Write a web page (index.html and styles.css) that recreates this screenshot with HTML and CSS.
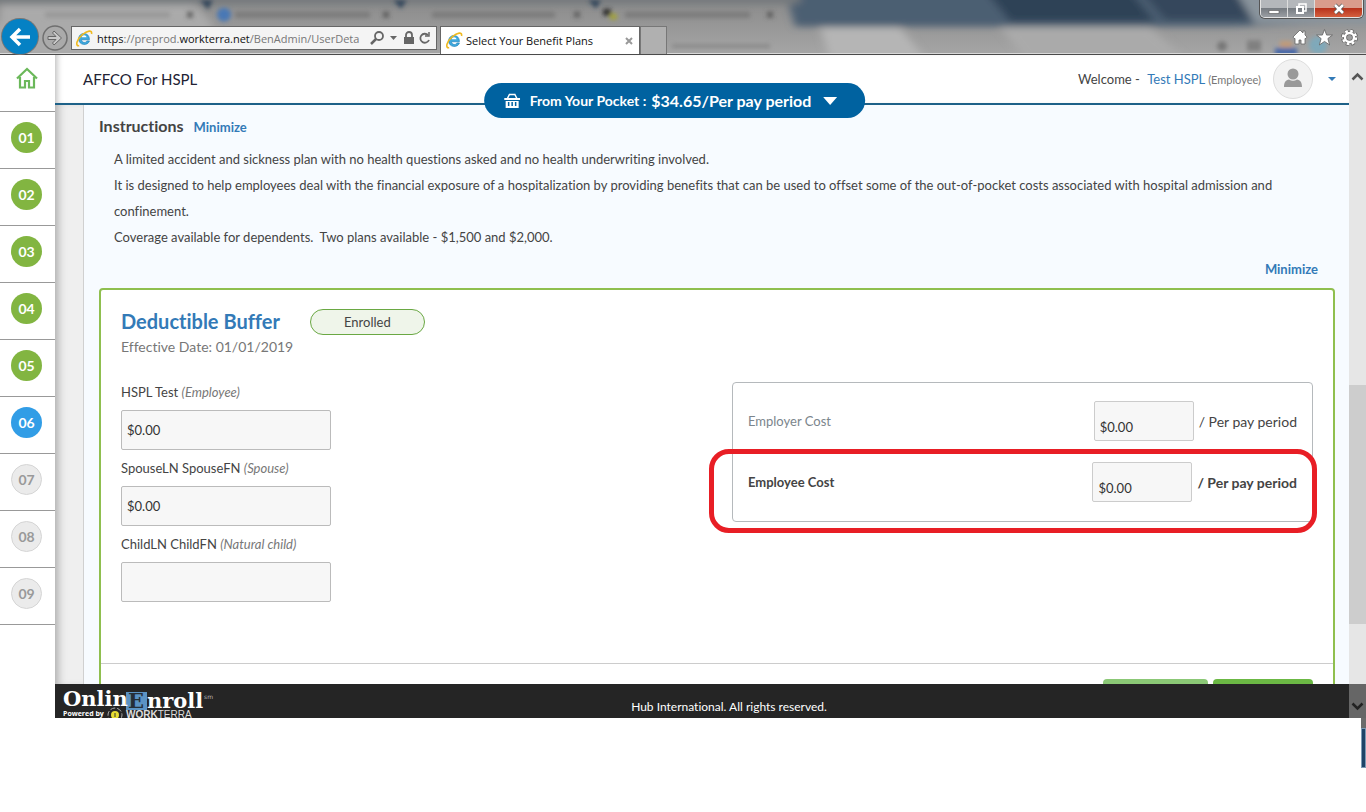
FILE: index.html
```html
<!DOCTYPE html>
<html lang="en">
<head>
    <meta charset="UTF-8">
    <meta name="viewport" content="width=device-width, initial-scale=1.0">
    <title>Select Your Benefit Plans</title>
    <link rel="stylesheet" href="styles.css">
</head>
<body>
    <svg class="defs" width="0" height="0" aria-hidden="true">
        <symbol id="ie" viewBox="0 0 16 16">
            <path d="M12.6 9.2H5.2c.2 3 4.300 3.300 5 1.100h2.500c-1.600 5-10.200 4.400-10.200-2 0-6.600 10.400-7 10.100.900z" fill="#3fa9dd" stroke="#1b7fba" stroke-width=".6"/>
            <path d="M5.300 6.900h4.600c-.2-2.500-4.200-2.600-4.600 0z" fill="#fff"/>
            <path d="M3 14.800C-1 15.500.5 9 6 4.400 10.500.6 15.500-.5 14.600 3.800" fill="none" stroke="#efb920" stroke-width="1.500"/>
        </symbol>
    </svg>

    <div class="browser">
        <!-- window frame -->
        <div class="chrome">
            <svg class="glass" viewBox="0 0 1366 54" preserveAspectRatio="none" aria-hidden="true">
                <defs>
                    <linearGradient id="toolbar" x1="0" y1="0" x2="0" y2="1">
                        <stop offset="0" stop-color="#8a8a8a"/>
                        <stop offset="1" stop-color="#a5a5a5"/>
                    </linearGradient>
                    <filter id="soft" x="-20%" y="-50%" width="140%" height="200%"><feGaussianBlur stdDeviation="4"/></filter>
                    <filter id="soft2" x="-20%" y="-80%" width="140%" height="260%"><feGaussianBlur stdDeviation="2"/></filter>
                </defs>
                <rect width="1366" height="54" fill="url(#toolbar)"/>
                <g filter="url(#soft)">
                    <path d="M785-10H1380V22L1230 27H795z" fill="#4b5f72"/>
                    <path d="M985-10H1130L1155 22H1010z" fill="#2f4257"/>
                    <path d="M1140-10H1240L1270 20H1165z" fill="#34475c"/>
                    <path d="M1235-10H1380V24H1255z" fill="#8a949d"/>
                    <path d="M-10-10H800V4H-10z" fill="#75797d"/>
                    <path d="M0 5H195L215 27H0z" fill="#aaa"/>
                    <path d="M-10 24H210V60H-10z" fill="#aaa"/>
                    <path d="M820 28H900L925 60H830z" fill="#b5b5b5"/>
                    <path d="M1000 28H1150L1185 60H1025z" fill="#aaa"/>
                </g>
                <g filter="url(#soft2)">
                    <path d="M45 12h125v6H45z" fill="#999"/>
                    <path d="M235 12h135v6H235zM432 12h123v6H432zM625 12h125v6H625z" fill="#7c7c7c"/>
                    <path d="M187 12l6 6m0-6l-6 6M383 12l6 6m0-6l-6 6M574 12l6 6m0-6l-6 6M767 12l6 6m0-6l-6 6" stroke="#555" stroke-width="2"/>
                    <path d="M200 0h13l-5 10zM393 0h14l-6 9zM588 0h13l-5 9z" fill="#34475c"/>
                    <circle cx="224" cy="15" r="7" fill="#4a78b5"/>
                    <path d="M603 9h8v7h-8z" fill="#333"/>
                    <path d="M610 14h7v6h-7z" fill="#a3a33a"/>
                    <path d="M672 45h98v4h-98z" fill="#888"/>
                    <circle cx="1222" cy="47" r="5" fill="#777"/>
                    <path d="M1247 41h14v11h-14z" fill="#808080"/>
                    <path d="M1275 49h22v8h-22z" fill="#4668a8"/>
                    <path d="M1280 42h12v6h-12z" fill="#c39a76"/>
                    <circle cx="1318" cy="46" r="9" fill="#7fa9ba"/>
                </g>
            </svg>
            <div class="window-buttons">
                <button type="button" aria-label="Minimize window"><svg width="12" height="12" viewBox="0 0 12 12"><path d="M1 7.500h10v3H1z" fill="#fff" stroke="#555" stroke-width=".6"/></svg></button>
                <button type="button" aria-label="Restore window"><svg width="12" height="12" viewBox="0 0 12 12"><path d="M4 3V1h7v7H9" fill="none" stroke="#fff" stroke-width="1.500"/><path d="M2 4h6v6H2z" fill="none" stroke="#fff" stroke-width="2"/></svg></button>
                <button type="button" class="close" aria-label="Close window"><svg width="12" height="12" viewBox="0 0 12 12"><path d="M2 2l8 8M10 2l-8 8" stroke="#555" stroke-width="4"/><path d="M2 2l8 8M10 2l-8 8" stroke="#fff" stroke-width="2.600"/></svg></button>
            </div>
            <div class="toolbar">
                <button type="button" class="back" aria-label="Back"><svg width="24" height="24" viewBox="0 0 24 24"><path d="M22 12H5M12 4l-8 8 8 8" fill="none" stroke="#fff" stroke-width="3.500"/></svg></button>
                <button type="button" class="forward" aria-label="Forward"><svg width="26" height="26" viewBox="0 0 26 26"><circle cx="13" cy="13" r="12" fill="#aaa" stroke="#6f6f6f" stroke-width="1.500"/><path d="M6 11.500h8L10.500 8l1.500-2 7.500 7-7.500 7-1.500-2 3.500-3.500H6z" fill="#c9c9c9" stroke="#666"/></svg></button>
                <div class="address">
                    <svg width="17" height="17"><use href="#ie"/></svg>
                    <div class="url"><b>https</b>://preprod.<b>workterra.net</b>/BenAdmin/UserDeta</div>
                    <svg width="62" height="16" viewBox="0 0 62 16" fill="none" stroke="#666">
                        <circle cx="9" cy="6" r="4" stroke-width="1.800"/><path d="M6 9l-5 5" stroke-width="2.500"/>
                        <path d="M20 6h7l-3.500 4z" fill="#666" stroke="none"/>
                        <path d="M34 7h10v7H34z" fill="#666" stroke="none"/><path d="M36 8V5a3 3 0 0 1 6 0v3" stroke-width="1.800"/>
                        <path d="M58 5a4.500 4.500 0 1 0 1 5" stroke-width="1.800"/><path d="M59 2v4h-4" stroke-width="1.500"/>
                    </svg>
                </div>
                <div class="tab">
                    <svg width="17" height="17"><use href="#ie"/></svg>
                    <span>Select Your Benefit Plans</span>
                    <button type="button" aria-label="Close tab"><svg width="8" height="8" viewBox="0 0 8 8"><path d="M1 1l6 6M7 1L1 7" stroke="#999" stroke-width="2"/></svg></button>
                </div>
                <button type="button" class="new-tab" aria-label="New tab"></button>
                <div class="tools">
                    <svg width="16" height="16" viewBox="0 0 16 16"><path d="M8 1L1 8l1 1.500h1V15h4v-4h2v4h4V9.500h1L15 8l-2-2V2h-2v2z" fill="#fff" stroke="#666" stroke-width=".8"/></svg>
                    <svg width="17" height="17" viewBox="0 0 16 16"><path d="M8 .5l2 5.200h5.500L11.200 9l1.600 6L8 11.700 3.200 15l1.600-6L.5 5.700H6z" fill="#fff" stroke="#666" stroke-width=".8"/></svg>
                    <svg width="17" height="17" viewBox="0 0 17 17"><circle cx="8.500" cy="8.500" r="6.500" fill="none" stroke="#666" stroke-width="4" stroke-dasharray="3.100 2"/><circle cx="8.500" cy="8.500" r="4.500" fill="none" stroke="#666" stroke-width="4"/><circle cx="8.500" cy="8.500" r="6.500" fill="none" stroke="#fff" stroke-width="2.400" stroke-dasharray="2.600 2.500"/><circle cx="8.500" cy="8.500" r="4.500" fill="none" stroke="#fff" stroke-width="2.400"/></svg>
                </div>
            </div>
        </div>

        <div class="viewport">
            <div class="page">
                <nav class="steps">
                    <a href="#" class="home" aria-label="Home"><svg width="22" height="22" viewBox="0 0 22 22" fill="none" stroke="#6bb85a" stroke-width="2.200"><path d="M1 11.500L11 2l10 9.500M4 10v10.500h5V14h4v6.500h5V10"/></svg></a>
                    <a href="#"><span class="step">01</span></a>
                    <a href="#"><span class="step">02</span></a>
                    <a href="#"><span class="step">03</span></a>
                    <a href="#"><span class="step">04</span></a>
                    <a href="#"><span class="step">05</span></a>
                    <a href="#"><span class="step current">06</span></a>
                    <a href="#"><span class="step pending">07</span></a>
                    <a href="#"><span class="step pending">08</span></a>
                    <a href="#"><span class="step pending">09</span></a>
                </nav>

                <div class="main">
                    <header class="header">
                        <div class="company">AFFCO For HSPL</div>
                        <div class="user">
                            <span>Welcome -</span>
                            <a href="#">Test HSPL</a>
                            <small>(Employee)</small>
                        </div>
                        <div class="avatar"><svg width="20" height="20" viewBox="0 0 20 20" fill="#999"><circle cx="10" cy="6" r="5.500"/><path d="M1 19c0-5 2-7 5-7.500 2.500 1.800 5.500 1.800 8 0 3 .5 5 2.500 5 7.500z"/></svg></div>
                        <button type="button" class="user-menu" aria-label="User menu"><svg width="8" height="4" viewBox="0 0 8 4"><path d="M0 0h8L4 4z" fill="#337ab7"/></svg></button>
                    </header>

                    <div class="content">
                        <div class="panel">
                            <div class="heading">
                                <h2>Instructions</h2>
                                <a href="#">Minimize</a>
                            </div>
                            <div class="instructions">
                                <p>A limited accident and sickness plan with no health questions asked and no health underwriting involved.</p>
                                <p>It is designed to help employees deal with the financial exposure of a hospitalization by providing benefits that can be used to offset some of the out-of-pocket costs associated with hospital admission and confinement.</p>
                                <p>Coverage available for dependents.&nbsp; Two plans available - $1,500 and $2,000.</p>
                            </div>
                            <a href="#" class="minimize">Minimize</a>

                            <section class="card">
                                <div class="card-body">
                                    <div class="plan">
                                        <h3>Deductible Buffer</h3>
                                        <span class="badge">Enrolled</span>
                                    </div>
                                    <div class="effective">Effective Date: 01/01/2019</div>
                                    <div class="columns">
                                        <form class="members">
                                            <label for="employee">HSPL Test <i>(Employee)</i></label>
                                            <input type="text" id="employee" value="$0.00">
                                            <label for="spouse">SpouseLN SpouseFN <i>(Spouse)</i></label>
                                            <input type="text" id="spouse" value="$0.00">
                                            <label for="child">ChildLN ChildFN <i>(Natural child)</i></label>
                                            <input type="text" id="child" value="">
                                        </form>
                                        <div class="costs">
                                            <div class="cost">
                                                <label for="employerCost">Employer Cost</label>
                                                <input type="text" id="employerCost" value="$0.00">
                                                <span>/ Per pay period</span>
                                            </div>
                                            <div class="cost employee">
                                                <label for="employeeCost">Employee Cost</label>
                                                <input type="text" id="employeeCost" value="$0.00">
                                                <span>/ Per pay period</span>
                                            </div>
                                            <div class="highlight"></div>
                                        </div>
                                    </div>
                                </div>
                                <div class="card-footer">
                                    <button type="button" class="light" aria-label="Previous"></button>
                                    <button type="button" aria-label="Next"></button>
                                </div>
                            </section>
                        </div>
                    </div>

                    <footer class="footer">
                        <svg class="logo" width="152" height="34" viewBox="0 0 152 34">
                            <path d="M63 8h21v18H63z" fill="#5b93c4"/>
                            <text x="0" y="22" class="logo-name">Onlin</text>
                            <text x="65" y="24" class="logo-e">E</text>
                            <text x="84" y="24" class="logo-name">nroll</text>
                            <text x="141" y="15" class="logo-mark">sm</text>
                            <text x="0" y="32" class="logo-powered">Powered by</text>
                            <circle cx="52" cy="31" r="7" fill="none" stroke="#aaa" stroke-width="1" stroke-dasharray="5 2"/>
                            <circle cx="52" cy="31" r="4" fill="#e6dc32"/>
                            <path d="M52 29v4" stroke="#333"/>
                            <text x="63" y="34" class="logo-work"><tspan class="strong">WORK</tspan>TERRA</text>
                        </svg>
                        <p>Hub International. All rights reserved.</p>
                    </footer>
                </div>

                <button type="button" class="pocket">
                    <svg width="16" height="16" viewBox="0 0 16 16"><path d="M3 6l2.500-5M13 6l-2.500-5M5 1.500h6" stroke="#fff" stroke-width="1.500" fill="none"/><path d="M0 5h16v2H0z" fill="#fff"/><path d="M1.500 8h13v7h-13z" fill="#fff"/><path d="M4.500 9v4M8 9v4M11.500 9v4" stroke="#0062a0" stroke-width="1.500"/></svg>
                    <span>From Your Pocket :</span>
                    <strong>$34.65/Per pay period</strong>
                    <svg width="14" height="8" viewBox="0 0 14 8"><path d="M0 0h14L7 8z" fill="#fff"/></svg>
                </button>
            </div>

            <div class="scrollbar">
                <svg width="13" height="9" viewBox="0 0 13 9"><path d="M1.500 7.500l5-5 5 5" fill="none" stroke="#555" stroke-width="2.500"/></svg>
                <div class="thumb"></div>
                <div class="scroll-end"><svg width="13" height="9" viewBox="0 0 13 9"><path d="M1.500 1.500l5 5 5-5" fill="none" stroke="#222" stroke-width="2.500"/></svg></div>
            </div>
        </div>
    </div>
    <div class="desktop-edge"></div>
</body>
</html>
```
FILE: styles.css
```css
* {
    box-sizing: border-box;
}
body {
    margin: 0;
    background-color: #ffffff;
    color: #444444;
    font-family: Lato, "Liberation Sans", sans-serif;
    font-size: 13px;
    font-variant-ligatures: none;
    overflow: hidden;
}
a {
    color: #337ab7;
    text-decoration: none;
}
button {
    border: none;
    padding: 0;
    background: none;
    font-family: inherit;
    cursor: pointer;
}
h2, h3, p {
    margin: 0;
}
svg {
    display: block;
    flex-shrink: 0;
}
.defs {
    position: absolute;
}
.browser {
    display: flex;
    flex-direction: column;
    height: calc(100vh - 94px);
}

/* window frame */
.chrome {
    position: relative;
    height: 55px;
    flex-shrink: 0;
    border-bottom: 1px solid #4a4a4a;
}
.glass {
    position: absolute;
    top: 0;
    left: 0;
    width: 100%;
    height: 100%;
    border-bottom: 1px solid #d8d8d8;
}
.window-buttons {
    position: absolute;
    top: 0;
    right: 3px;
    display: flex;
    height: 18px;
    border: 1px solid #e4e4e4;
    border-top: none;
    border-radius: 0 0 5px 5px;
    overflow: hidden;
    box-shadow: 0 0 0 1px #555555;
}
.window-buttons button {
    width: 27px;
    display: flex;
    align-items: center;
    justify-content: center;
    background: linear-gradient(#b4b7bb 50%, #777c82 50%, #9a9ea3);
    border-right: 1px solid #dddddd;
}
.window-buttons .close {
    width: 47px;
    background: linear-gradient(#d99c8c 45%, #b8331c 50%, #d4603f);
    border: none;
}
.toolbar {
    position: relative;
    display: flex;
    align-items: flex-end;
    height: 54px;
}
.back {
    display: flex;
    align-items: center;
    justify-content: center;
    width: 36px;
    height: 35px;
    margin-left: 2px;
    border-radius: 18px;
    background-color: #0581c4;
    box-shadow: 0 0 0 1px #777777;
}
.forward {
    margin: 0 3px 3px 4px;
}
.address {
    display: flex;
    align-items: center;
    gap: 4px;
    width: 366px;
    height: 24px;
    padding: 0 4px;
    margin-bottom: 4px;
    background-color: #f4f4f4;
    border: 1px solid #666666;
}
.url {
    flex: 1;
    white-space: nowrap;
    color: #777777;
    font: 11px "Open Sans", sans-serif;
}
.url b {
    color: #111111;
    font-weight: 400;
}
.tab {
    display: flex;
    align-items: center;
    gap: 3px;
    width: 200px;
    height: 28px;
    margin-left: 3px;
    padding: 0 6px 0 5px;
    background-color: #ffffff;
    border: 1px solid #666666;
    border-bottom: none;
    color: #111111;
    font: 11px "Open Sans", sans-serif;
}
.tab span {
    flex: 1;
    white-space: nowrap;
}
.new-tab {
    width: 27px;
    height: 28px;
    background-color: #b0b0b0;
    border: 1px solid #777777;
    border-bottom: none;
}
.tools {
    display: flex;
    gap: 8px;
    margin: 0 8px 8px auto;
}

/* page */
.viewport {
    display: flex;
    flex: 1;
    min-height: 0;
}
.page {
    position: relative;
    display: flex;
    flex: 1;
    min-width: 0;
}
.steps {
    width: 55px;
    flex-shrink: 0;
    background-color: #ffffff;
}
.steps a {
    display: flex;
    align-items: center;
    justify-content: center;
    height: 57px;
    padding: 0 2px 6px 0;
    border-bottom: 1px solid #999999;
}
.steps .home {
    padding-bottom: 10px;
}
.step {
    width: 31px;
    height: 31px;
    border-radius: 50%;
    background-color: #82b541;
    color: #ffffff;
    font-size: 14px;
    font-weight: 700;
    line-height: 32px;
    text-align: center;
}
.step.current {
    background-color: #319de6;
}
.step.pending {
    background-color: #ebebeb;
    border: 1px solid #d5d5d5;
    color: #999999;
    line-height: 30px;
}
.main {
    display: flex;
    flex-direction: column;
    flex: 1;
    min-width: 0;
}
.header {
    display: flex;
    align-items: center;
    height: 50px;
    flex-shrink: 0;
    padding: 0 13px 0 28px;
    border-bottom: 2px solid #1d6188;
    box-shadow: inset 6px 0 6px -4px #bbbbbb;
}
.company {
    flex: 1;
    color: #222233;
    font-size: 15px;
}
.user a {
    margin: 0 0 0 4px;
}
.user small {
    color: #777777;
    font-size: 11px;
}
.avatar {
    display: flex;
    justify-content: center;
    width: 40px;
    height: 40px;
    margin: 0 15px 0 12px;
    padding-top: 8px;
    border: 1px solid #dddddd;
    border-radius: 50%;
    background-color: #f2f2f2;
}
.content {
    flex: 1;
    min-height: 0;
    overflow: hidden;
    padding-left: 28px;
    background-color: #efefef;
    box-shadow: inset 8px 0 8px -5px #aaaaaa;
}
.panel {
    padding: 10px 14px 0 15px;
    background-color: #f7fbff;
    border-left: 1px solid #d0d0d0;
}
.heading {
    display: flex;
    align-items: baseline;
    gap: 10px;
    line-height: 22px;
}
.heading h2 {
    font-size: 16px;
}
.heading a, .minimize {
    font-weight: 700;
}
.instructions {
    padding: 8px 30px 0 15px;
    line-height: 26px;
}
.minimize {
    display: block;
    padding: 9px 17px 9px 0;
    line-height: 20px;
    text-align: right;
}
.card {
    border: 2px solid #8fbf4f;
    border-radius: 4px;
    background-color: #ffffff;
}
.card-body {
    padding: 17px 20px 53px;
}
.plan {
    display: flex;
    align-items: flex-end;
    gap: 30px;
}
.plan h3 {
    color: #337ab7;
    font-size: 20px;
    line-height: 28px;
}
.badge {
    width: 115px;
    height: 26px;
    border: 1px solid #6aa843;
    border-radius: 13px;
    background-color: #eff5ea;
    line-height: 24px;
    text-align: center;
}
.effective {
    color: #777777;
    font-size: 14px;
    line-height: 24px;
}
.columns {
    display: flex;
    align-items: flex-start;
    justify-content: space-between;
    padding-top: 23px;
}
.members {
    display: flex;
    flex-direction: column;
    width: 210px;
}
.members label {
    line-height: 20px;
}
.members i {
    color: #777777;
}
.members input {
    margin: 8px 0;
}
input {
    height: 40px;
    padding: 0 5px;
    border: 1px solid #bbbbbb;
    border-radius: 2px;
    background-color: #f7f7f7;
    color: #333333;
    font-family: inherit;
    font-size: 13px;
}
.costs {
    position: relative;
    width: 581px;
    height: 140px;
    padding: 18px 15px;
    border: 1px solid #b5b9bc;
    border-radius: 4px;
}
.cost {
    display: flex;
    align-items: center;
    gap: 5px;
    margin-bottom: 21px;
}
.cost label {
    flex: 1;
    color: #7b858c;
}
.cost input {
    width: 100px;
    padding-top: 12px;
    border-color: #cccccc;
}
.cost span {
    font-size: 14px;
}
.cost.employee label, .cost.employee span {
    color: #444444;
    font-weight: 700;
}
.highlight {
    position: absolute;
    top: 66px;
    right: -5px;
    bottom: -12px;
    left: -24px;
    border: 5px solid #e81e25;
    border-radius: 20px;
    pointer-events: none;
}
.card-footer {
    display: flex;
    justify-content: flex-end;
    gap: 5px;
    padding: 15px 20px;
    border-top: 1px solid #cccccc;
}
.card-footer button {
    width: 100px;
    height: 34px;
    border-radius: 4px;
    background-color: #6bb844;
}
.card-footer .light {
    width: 105px;
    background-color: #8bc876;
}
.footer {
    display: flex;
    height: 34px;
    flex-shrink: 0;
    padding: 0 106px 0 8px;
    background-color: #252525;
    color: #ffffff;
    overflow: hidden;
}
.footer p {
    flex: 1;
    padding-top: 11px;
    font-size: 12px;
    line-height: 23px;
    text-align: center;
}
.logo-name {
    fill: #ffffff;
    font: bold 21px "DejaVu Serif", serif;
}
.logo-e {
    fill: #252f38;
    font: bold 21px "DejaVu Serif", serif;
}
.logo-mark {
    fill: #bbbbbb;
    font: 6px "DejaVu Sans", sans-serif;
}
.logo-powered {
    fill: #ffffff;
    font: bold 7px "Open Sans", sans-serif;
}
.logo-work {
    fill: #dddddd;
    font: 10px "Liberation Sans", sans-serif;
}
.logo-work .strong {
    font-weight: bold;
}
.pocket {
    position: absolute;
    top: 28px;
    left: 50%;
    transform: translateX(-50%);
    display: flex;
    align-items: center;
    height: 35px;
    padding: 0 28px 0 20px;
    border-radius: 18px;
    background-color: #0062a0;
    color: #ffffff;
    white-space: nowrap;
}
.pocket span {
    margin: 0 5px 0 10px;
    font-size: 14px;
    font-weight: 700;
}
.pocket strong {
    margin-right: 12px;
    font-size: 16px;
}

/* scrollbar */
.scrollbar {
    display: flex;
    flex-direction: column;
    align-items: center;
    width: 17px;
    padding-top: 17px;
    background-color: #e6e6e6;
}
.thumb {
    width: 100%;
    height: 37%;
    margin: auto 0 60px;
    background-color: #cdcdcd;
}
.scroll-end {
    display: flex;
    align-items: center;
    justify-content: center;
    width: 100%;
    height: 34px;
    padding-top: 10px;
    background-color: #666666;
}
.desktop-edge {
    width: 5px;
    height: 50px;
    margin-left: auto;
    background-color: #1f4468;
    border-top: 10px solid #6b6b6b;
    box-shadow: inset 0 0 0 1px #7d9ab5;
}
```
